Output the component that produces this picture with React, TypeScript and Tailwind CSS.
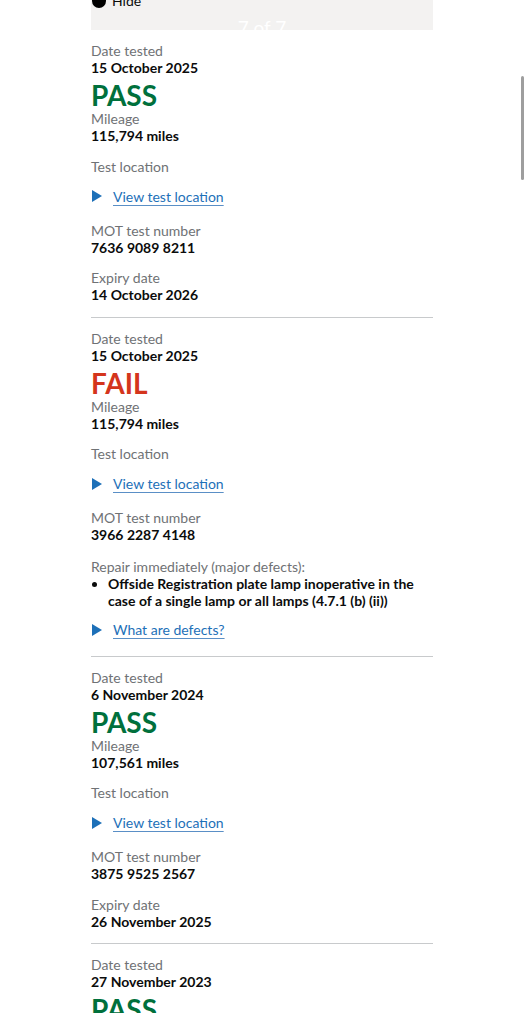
const font = { fontFamily: 'Lato, "Noto Sans", Arial, sans-serif' }

function Label({ children, className = "" }: { children: React.ReactNode; className?: string }) {
  return <p className={`text-[14px] leading-[17px] text-[#6f7275] ${className}`}>{children}</p>
}

function Value({ children }: { children: React.ReactNode }) {
  return <p className="text-[14px] leading-[17px] font-bold text-[#0b0c0c]">{children}</p>
}

function Result({ pass }: { pass: boolean }) {
  return (
    <p
      className={`mt-[4px] text-[28px] leading-[30px] font-bold ${pass ? "text-[#00703c]" : "text-[#d4351c]"}`}
    >
      {pass ? "PASS" : "FAIL"}
    </p>
  )
}

function Details({ text, className = "" }: { text: string; className?: string }) {
  return (
    <div className={`flex items-center h-[17px] ${className}`}>
      <svg width="10" height="12" viewBox="0 0 10 12" className="ml-[1px] mr-[11px]">
        <path d="M0 0 L10 6 L0 12 Z" fill="#1d70b8" />
      </svg>
      <span className="text-[14px] leading-[17px] text-[#1d70b8] underline underline-offset-[3px] decoration-[1px] decoration-[#5a8fc6]">
        {text}
      </span>
    </div>
  )
}

type Test = {
  date: string
  pass: boolean
  mileage: string
  number: string
  expiry?: string
  defects?: boolean
}

const tests: Test[] = [
  { date: "15 October 2025", pass: true, mileage: "115,794 miles", number: "7636 9089 8211", expiry: "14 October 2026" },
  { date: "15 October 2025", pass: false, mileage: "115,794 miles", number: "3966 2287 4148", defects: true },
  { date: "6 November 2024", pass: true, mileage: "107,561 miles", number: "3875 9525 2567", expiry: "26 November 2025" },
  { date: "27 November 2023", pass: true, mileage: "", number: "" },
]

function TestCard({ t }: { t: Test }) {
  return (
    <div className="pt-[12px]">
      <Label>Date tested</Label>
      <Value>{t.date}</Value>
      <Result pass={t.pass} />
      <Label>Mileage</Label>
      <Value>{t.mileage}</Value>
      <Label className="mt-[13.5px]">Test location</Label>
      <Details text="View test location" className="mt-[13px]" />
      <div className="mt-[17px]">
        <Label>MOT test number</Label>
        <Value>{t.number}</Value>
      </div>
      {t.expiry && (
        <div className="mt-[13.5px]">
          <Label>Expiry date</Label>
          <Value>{t.expiry}</Value>
        </div>
      )}
      {t.defects && (
        <>
          <div className="mt-[15px]">
            <Label>Repair immediately (major defects):</Label>
            <ul className="list-disc pl-[17px] marker:text-[#0b0c0c]">
              <li className="text-[14px] leading-[17px] font-bold text-[#0b0c0c]">
                Offside Registration plate lamp inoperative in the
                <br />
                case of a single lamp or all lamps (4.7.1 (b) (ii))
              </li>
            </ul>
          </div>
          <Details text="What are defects?" className="mt-[12px]" />
        </>
      )}
      <div className={`${t.defects ? "mt-[17.5px]" : "mt-[13.5px]"} h-px bg-[#c8cacc]`} />
    </div>
  )
}

export default function App() {
  return (
    <main className="relative w-[529px] h-[1024px] bg-white overflow-hidden" style={font}>
      <div className="h-[1013px] overflow-hidden">
        <div className="ml-[91px] w-[342px]">
          <div className="h-[30px] bg-[#f3f2f1] overflow-hidden flex flex-col">
            <div className="-mt-[8px] flex items-center gap-[6px] pl-[1px]">
              <span className="w-[14px] h-[14px] rounded-full bg-black" />
              <span className="text-[14px] leading-[17px] text-[#0b0c0c]">Hide</span>
            </div>
            <p className="mt-[8px] text-center text-[19px] leading-[22px] text-white">7 of 7</p>
          </div>
          {tests.map((t, i) => (
            <TestCard key={i} t={t} />
          ))}
        </div>
      </div>
      <div className="absolute left-[521px] top-[76px] w-[3px] h-[104px] rounded-full bg-[#9e9e9e]" />
    </main>
  )
}
